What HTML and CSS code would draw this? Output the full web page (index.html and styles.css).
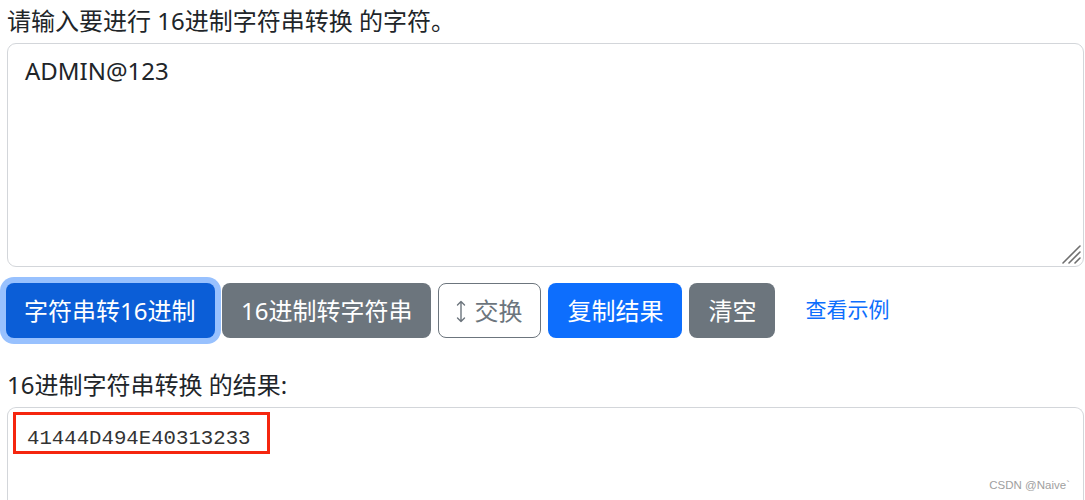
FILE: index.html
```html
<!doctype html>
<html lang="zh">
	<head>
		<meta charset="UTF-8" />
		<meta name="viewport" content="width=device-width, initial-scale=1.0" />
		<title>16进制字符串转换</title>
		<link rel="stylesheet" href="styles.css">
	</head>
	<body>
		<div class="container">
			<label class="form-label" for="input">请输入要进行 16进制字符串转换 的字符。</label>
			<div class="input-wrap">
				<textarea class="form-control input-area" id="input">ADMIN@123</textarea>
				<!-- 右下角拖动手柄 -->
				<svg class="grip" width="22" height="22" viewBox="0 0 22 22" stroke="#6f6f6f" stroke-width="1.6" stroke-linecap="round">
					<path d="M3 20L20 3M9 20L20 9M15 20L20 15" />
				</svg>
			</div>

			<div class="btn-row">
				<button class="btn btn-primary active">字符串转16进制</button>
				<button class="btn btn-secondary">16进制转字符串</button>
				<button class="btn btn-outline">
					<svg class="icon" width="10" height="23" viewBox="0 0 10 23" fill="none" stroke="currentColor" stroke-width="1.4" stroke-linecap="round" stroke-linejoin="round">
						<path d="M5 1.5v20M1.5 5L5 1.5 8.5 5M1.5 18L5 21.5 8.5 18" />
					</svg>
					交换
				</button>
				<button class="btn btn-blue">复制结果</button>
				<button class="btn btn-secondary">清空</button>
				<a class="btn-link" href="#">查看示例</a>
			</div>

			<label class="form-label result-label">16进制字符串转换 的结果:</label>
			<div class="form-control result-area">
				<span class="mark"></span>
				<span class="result-text">41444D494E40313233</span>
			</div>
		</div>
		<div class="watermark">CSDN @Naive`</div>
	</body>
</html>
```

FILE: styles.css
```css
:root {
	--primary: #0d6efd;
	--primary-active: #0b5ed7;
	--secondary: #6c757d;
	--text: #212529;
	--border: #d3d6da;
}

* {
	box-sizing: border-box;
}

html {
	overflow: hidden;
}

body {
	margin: 0;
	padding: 3px 1px 0 7px;
	font-family: 'Noto Sans', 'Noto Sans CJK SC', sans-serif;
	font-size: 24px;
	line-height: 35px;
	color: var(--text);
	background: #fff;
	overflow: hidden;
	height: 500px;
	position: relative;
}

.form-label {
	display: block;
	margin-bottom: 5px;
}

.form-control {
	display: block;
	width: 100%;
	padding: 9px 17px;
	font: inherit;
	color: var(--text);
	border: 1px solid var(--border);
	border-radius: 9px;
	background: #fff;
}

.input-wrap {
	position: relative;
}

.input-area {
	height: 224px;
	resize: none;
	outline: none;
}

.grip {
	position: absolute;
	right: 2px;
	bottom: 2px;
}

.btn-row {
	display: flex;
	align-items: center;
	gap: 7px;
	margin-top: 16px;
}

.btn {
	display: inline-flex;
	align-items: center;
	height: 55px;
	padding: 0 18px;
	font: inherit;
	border: 1px solid transparent;
	border-radius: 8px;
	color: #fff;
	cursor: pointer;
}

.btn-primary {
	background: var(--primary);
}

.btn-primary.active {
	background: var(--primary-active);
	box-shadow: 0 0 0 6px #98c1fe;
	margin-left: -1px;
	width: 209px;
	padding: 0 17px;
}

.btn-secondary {
	background: var(--secondary);
}

.btn-outline {
	background: #fff;
	color: var(--secondary);
	border-color: var(--secondary);
	padding: 0 18px 0 17px;
}

.btn-outline .icon {
	margin-right: 8px;
	margin-top: 1px;
}

.btn-blue {
	background: var(--primary);
}

.btn-link {
	color: var(--primary);
	text-decoration: none;
	font-size: 21px;
	margin-left: 23px;
	padding-bottom: 2px;
}

.result-label {
	margin-top: 29px;
}

.result-area {
	position: relative;
	height: 93px;
	border-bottom: 0;
	border-radius: 9px 9px 0 0;
}

.result-text {
	font-family: 'Liberation Mono', monospace;
	font-size: 20.7px;
	color: #333;
	margin-left: 2px;
}

.mark {
	position: absolute;
	left: 5px;
	top: 4px;
	width: 257px;
	height: 42px;
	border: 3px solid #f5260f;
}

.watermark {
	position: absolute;
	right: 15px;
	bottom: 9px;
	font-family: 'Liberation Sans', Arial, sans-serif;
	font-size: 11.5px;
	line-height: 1;
	color: #a0a0a0;
}
```
